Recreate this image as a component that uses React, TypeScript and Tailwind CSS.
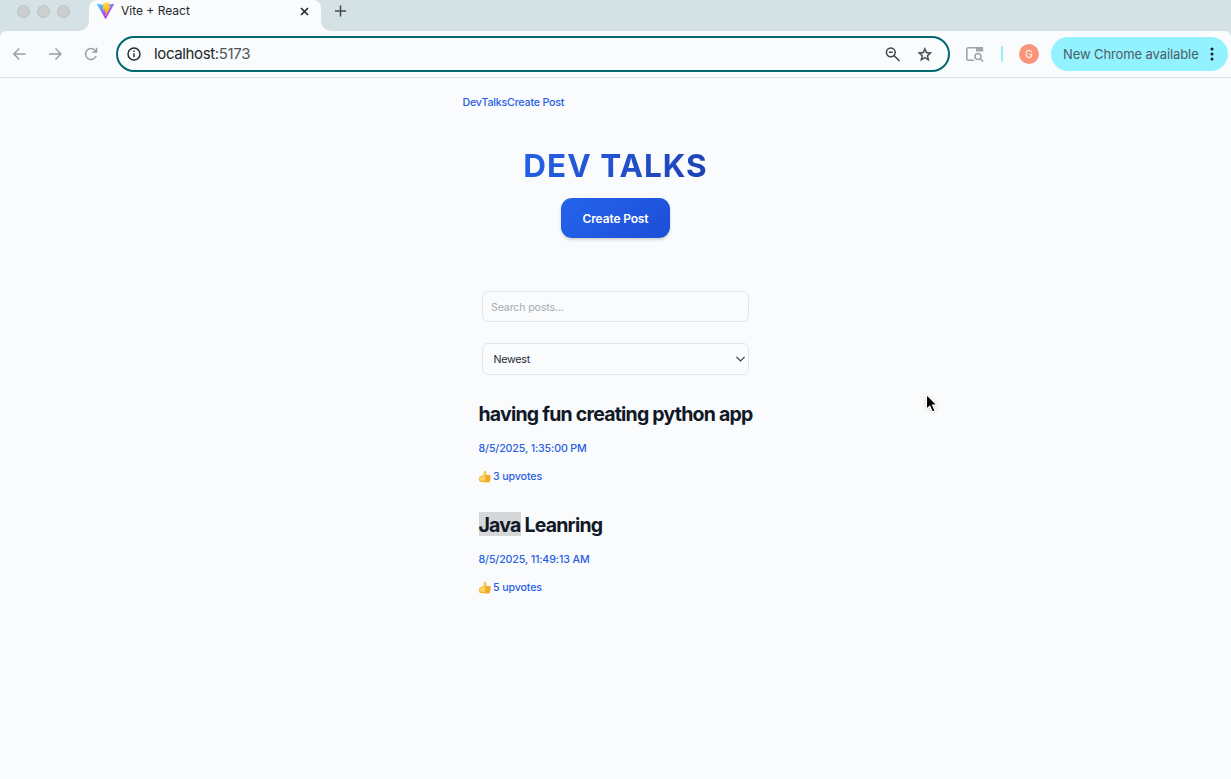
import React from "react";

const posts = [
  { id: 1, marked: "", title: "having fun creating python app", date: "8/5/2025, 1:35:00 PM", votes: 3 },
  { id: 2, marked: "Java", title: " Leanring", date: "8/5/2025, 11:49:13 AM", votes: 5 },
];

function ViteLogo() {
  return (
    <svg className="h-[17px] w-[17px] shrink-0" viewBox="0 0 256 257">
      <defs>
        <linearGradient id="vite-a" x1="0%" x2="58%" y1="8%" y2="79%">
          <stop offset="0%" stopColor="#41D1FF" />
          <stop offset="100%" stopColor="#BD34FE" />
        </linearGradient>
        <linearGradient id="vite-b" x1="43%" x2="50%" y1="2%" y2="89%">
          <stop offset="0%" stopColor="#FFEA83" />
          <stop offset="8%" stopColor="#FFDD35" />
          <stop offset="100%" stopColor="#FFA800" />
        </linearGradient>
      </defs>
      <path fill="url(#vite-a)" d="M255.153 37.938 134.897 252.976c-2.483 4.44-8.862 4.466-11.382.048L.875 37.958c-2.746-4.814 1.371-10.646 6.827-9.67l120.385 21.517a6.537 6.537 0 0 0 2.322-.004l117.867-21.483c5.438-.991 9.574 4.796 6.877 9.62Z" />
      <path fill="url(#vite-b)" d="M185.432.063 96.44 17.501a3.268 3.268 0 0 0-2.634 3.014l-5.474 92.456a3.268 3.268 0 0 0 3.997 3.378l24.777-5.718c2.318-.535 4.413 1.507 3.936 3.838l-7.361 36.047c-.495 2.426 1.782 4.5 4.151 3.78l15.304-4.649c2.372-.72 4.652 1.36 4.15 3.788l-11.698 56.621c-.732 3.542 3.979 5.473 5.943 2.437l1.313-2.028 72.516-144.72c1.215-2.423-.88-5.186-3.54-4.672l-25.505 4.922c-2.396.462-4.435-1.77-3.759-4.114l16.646-57.705c.677-2.35-1.37-4.583-3.769-4.113Z" />
    </svg>
  );
}

function ThumbsUp() {
  return (
    <svg className="mr-[2.500px] h-3 w-3 shrink-0" viewBox="0 0 12 12">
      <path fill="#f6b333" d="M.4 6.100C1.200 5.300 2.300 5.500 3.300 4.600 4.400 3.600 4.900 2.500 4.800 1.100 4.700-.2 6.300-.5 7 .7c.6 1.200.4 2.200 0 3.300h3.500c1.500 0 1.600 1.700.6 2.100.9.400.8 1.600 0 1.900.6.600.4 1.500-.3 1.700.3.900-.2 1.800-1.200 1.800H6c-1 0-1.700-.3-2.600-.5-1.200-.1-2.500.1-2.900-.5C-.1 9.700 0 6.900.4 6.100Z" />
      <path fill="#ffd65c" d="M.9 6.600C2.500 6.500 3.900 5.500 4.700 4.300c.8-1.100.5-2.500.7-3.400.2-.5.7-.5 1 0 .5 1.100 0 2.600-.4 3.900v4.400c-1.900.7-4 .5-5.200.1Z" />
      <path stroke="#d98b1d" strokeWidth=".5" strokeLinecap="round" fill="none" d="M8 6.100h2.800M7.900 8h2.800M7.800 9.700h2.100M7.600 4.200c-.8.3-1.200.8-1 1.600" />
    </svg>
  );
}

function TabStrip() {
  return (
    <div className="flex h-[31px] bg-[#d4e2e6]">
      <div className="flex w-[79px] shrink-0 items-start gap-[7px] pl-[17px] pt-[5px]">
        {[0, 1, 2].map((n) => (
          <span key={n} className="h-[13px] w-[13px] shrink-0 rounded-full border border-[#bdc1c2] bg-[#cccfd0]" />
        ))}
      </div>
      <div className="mt-[21px] h-2.5 w-2.5 shrink-0 bg-[#f9fbfc]">
        <div className="h-full w-full rounded-br-[10px] bg-[#d4e2e6]" />
      </div>
      <div className="flex h-[31px] w-[232px] shrink-0 items-start rounded-t-lg bg-[#f9fbfc] pl-2">
        <div className="pt-[2px]"><ViteLogo /></div>
        <span className="ml-[7px] mt-[2px] w-[179px] shrink-0 text-[12px] leading-[18px] text-[#24292b]">Vite + React</span>
        <svg className="mt-[7px] h-[9px] w-[9px]" viewBox="0 0 9 9" stroke="#202628" strokeWidth="1.6" fill="none"><path d="m1 1 7 7m0-7L1 8" /></svg>
      </div>
      <div className="mt-[21px] h-2.5 w-2.5 shrink-0 bg-[#f9fbfc]">
        <div className="h-full w-full rounded-bl-[10px] bg-[#d4e2e6]" />
      </div>
      <svg className="ml-1 mt-[5px] h-3 w-[11px]" viewBox="0 0 11 12" stroke="#41494c" strokeWidth="1.5"><path d="M5.500.5v11M0 6h11" /></svg>
    </div>
  );
}

function Toolbar() {
  return (
    <div className="bg-[#d4e2e6]">
      <div className="flex h-[47px] items-center rounded-t-[6px] border-b border-[#d4e2e6] bg-[#f9fbfc] pl-[13px]">
        <svg className="h-3 w-[13px]" viewBox="0 0 13 12" fill="none" stroke="#9b9fa1" strokeWidth="1.45"><path d="M12.500 6H1M6.300.6.900 6l5.400 5.400" /></svg>
        <svg className="ml-[23px] h-3 w-[13px]" viewBox="0 0 13 12" fill="none" stroke="#9b9fa1" strokeWidth="1.45"><path d="M0 6h11.700M6.500.6 11.900 6l-5.400 5.400" /></svg>
        <svg className="ml-[22px] h-[14px] w-[14px]" viewBox="0 0 14 14" fill="none" stroke="#9b9fa1" strokeWidth="1.45"><path d="M12.200 9A5.500 5.500 0 1 1 11 3.200L12.500 5M12.600.8V5H8.300" /></svg>
        <div className="ml-[18px] flex h-9 w-[834px] shrink-0 items-center rounded-full border-2 border-[#006970] pl-[9px] pr-[15px]">
          <svg className="h-[14px] w-[14px]" viewBox="0 0 14 14" fill="none" stroke="#252b2d" strokeWidth="1.45"><circle cx="7" cy="7" r="6" /><path d="M7 6.300v4M7 3.600v1.500" /></svg>
          <span className="ml-[13px] flex-1 text-[15px] leading-5 tracking-[-0.36px] text-[#202628]">localhost<span className="text-[#50575a]">:5173</span></span>
          <svg className="h-[15px] w-[15px]" viewBox="0 0 15 15" fill="none" stroke="#3d4345" strokeWidth="1.5"><circle cx="5.800" cy="5.300" r="4.400" /><path d="m9 8.500 5.500 5.500M3.900 5.300h3.800" /></svg>
          <svg className="ml-[16px] h-[17px] w-[17px]" viewBox="0 0 24 24" fill="#3d4345"><path d="m22.500 9.240-7.190-.62L12.500 2 9.690 8.630 2.500 9.240l5.460 4.730L6.320 21 12.500 17.270 18.680 21l-1.630-7.030L22.500 9.240ZM12.500 15.400l-3.760 2.270 1-4.280-3.320-2.880 4.380-.38L12.500 6.100l1.710 4.040 4.380.38-3.320 2.880 1 4.280L12.500 15.400Z" stroke="#3d4345" strokeWidth=".4" /></svg>
        </div>
        <svg className="ml-4 h-[15px] w-[18px]" viewBox="0 0 18 15" fill="none" stroke="#a0a4a6" strokeWidth="1.6"><path d="M8 13.200H2.300c-1 0-1.500-.500-1.500-1.500V2.300c0-1 .5-1.500 1.500-1.500H17" /><path d="M10 0h5.500c1 0 1.700.8 1.700 1.800V4.500H10Z" fill="#a0a4a6" stroke="none" /><circle cx="12" cy="9.500" r="3" /><path d="m14.200 11.700 2.900 2.900" /></svg>
        <span className="ml-[17px] h-4 w-0.5 shrink-0 rounded-full bg-[#91effa]" />
        <span className="ml-4 flex h-5 w-5 shrink-0 items-center justify-center rounded-full bg-[#f8957b] text-[10px] text-white">G</span>
        <div className="ml-3 flex h-[34px] w-[177px] shrink-0 items-center rounded-full bg-[#93f2ff] pl-3">
          <span className="w-[142px] whitespace-nowrap text-[13px] leading-5 tracking-[-0.1px] text-[#4b6065]">New Chrome available</span>
          <svg className="ml-[5px] h-[14px] w-1" viewBox="0 0 4 14" fill="#142225"><circle cx="2" cy="2" r="1.500" /><circle cx="2" cy="7" r="1.500" /><circle cx="2" cy="12" r="1.500" /></svg>
        </div>
      </div>
    </div>
  );
}

export default function App() {
  return (
    <div className="relative flex h-[779px] w-[1231px] flex-col overflow-hidden bg-[#f9fbfc] font-['Inter','Liberation_Sans',sans-serif]">
      <TabStrip />
      <Toolbar />
      <main className="mx-auto flex w-[306px] flex-col pt-[17px]">
        <nav className="flex h-4 text-[10.67px] font-medium leading-4 tracking-[-0.2px] text-[#2860e4]">
          <a href="#posts" className="whitespace-nowrap">DevTalks</a>
          <a href="#create" className="whitespace-nowrap">Create Post</a>
        </nav>
        <header className="flex flex-col items-center pt-[35px]">
          <h1 className="h-10 whitespace-nowrap bg-linear-135 from-[#2563eb] to-[#1e40af] bg-clip-text text-[31.500px] font-bold leading-10 tracking-[1px] text-transparent">DEV TALKS</h1>
          <button className="mt-[12px] h-10 w-[109px] rounded-[11px] bg-linear-135 from-[#2563eb] to-[#1d4ed8] pt-px text-[12px] font-semibold tracking-[-0.15px] text-white shadow-[0_2px_3px_rgba(0,0,0,0.16)]">Create Post</button>
        </header>
        <div className="mt-[53px] flex flex-col items-center gap-[21px]">
          <input aria-label="Search posts" placeholder="Search posts..." className="h-[31px] w-[267px] rounded-[6px] border border-[#e3e6e9] bg-transparent px-2 pt-px text-[10.67px] tracking-[-0.16px] text-[#1f2937] outline-none placeholder:text-[#a7abb0]" />
          <div className="relative h-8 w-[267px]">
            <select aria-label="Sort" className="h-full w-full appearance-none rounded-[6px] border border-[#e3e6e9] bg-transparent pl-[10.500px] pt-[2px] text-[10.67px] tracking-[-0.25px] text-[#1f2937] outline-none">
              <option>Newest</option>
              <option>Most upvoted</option>
            </select>
            <svg className="pointer-events-none absolute right-1 top-[13px] h-[6px] w-[9px]" viewBox="0 0 9 6" fill="none" stroke="#303943" strokeWidth="1.1"><path d="m.4.8 4.100 4.100L8.600.8" /></svg>
          </div>
        </div>
        <section className="pl-4 pt-[25px]">
          {posts.map((p) => (
            <article key={p.id} className="h-[111px] whitespace-nowrap text-[10.67px] font-medium tracking-[-0.13px] text-[#2860e4]">
              <h2 className="h-7 text-[19.500px] font-bold leading-[29px] tracking-[-0.78px] text-[#111827]">
                {p.marked && <mark className="bg-linear-to-t from-transparent from-[1px] to-[#d5d7d9] to-[1px] bg-transparent text-[#111827] shadow-[0_-1px_0_#d5d7d9]">{p.marked}</mark>}{p.title}
              </h2>
              <p className="mt-[13px] h-4 leading-4">{p.date}</p>
              <p className="mt-[12px] flex h-4 items-center leading-4"><ThumbsUp />{p.votes} upvotes</p>
            </article>
          ))}
        </section>
      </main>
      <svg className="absolute left-[923px] top-[393px] h-[22px] w-4 drop-shadow-sm" viewBox="0 0 16 22"><path d="M3.500 1.500v14.600l3.300-3 2.500 5.900 2.700-1.100-2.500-5.800h4.500Z" fill="#000" stroke="#fff" strokeWidth="1.100" /></svg>
    </div>
  );
}
